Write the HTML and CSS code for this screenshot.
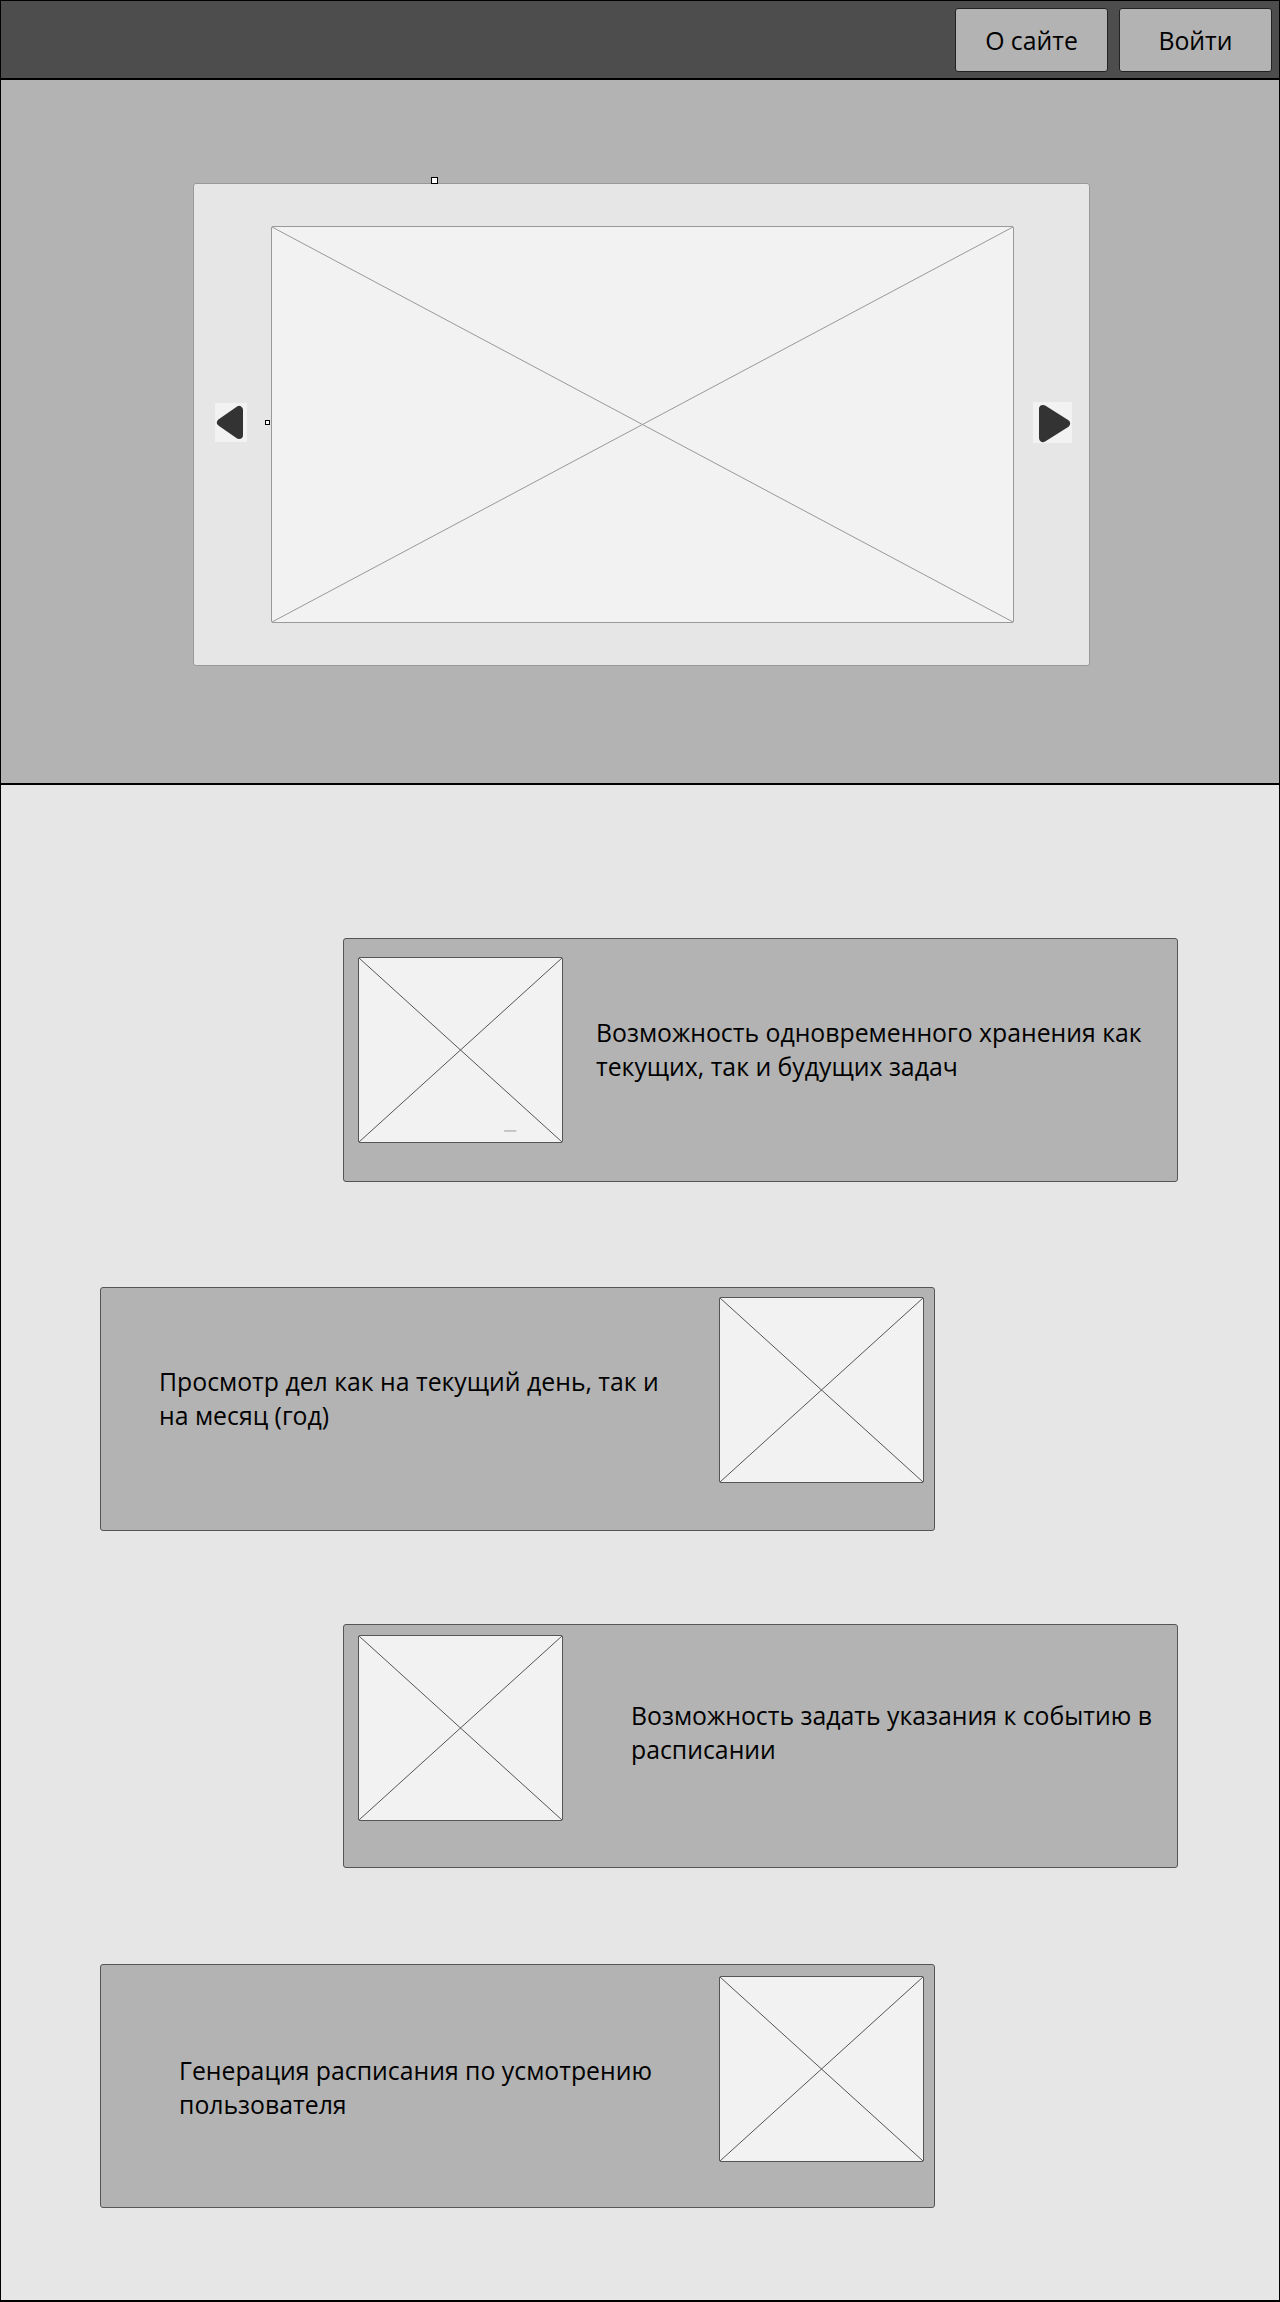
FILE: index.html
```html
<!DOCTYPE html>
<html lang="ru">
<head>
<meta charset="UTF-8" />
<meta name="viewport" content="width=device-width, initial-scale=1.0"/>
<title>Планировщик</title>
<link rel="stylesheet" href="styles.css">
</head>
<body>
<div class="site">

<header class="topbar">
  <button class="top-btn">О сайте</button>
  <button class="top-btn">Войти</button>
</header>

<section class="hero">
  <div class="slider">
    <span class="handle handle-top"></span>
    <span class="handle handle-left"></span>
    <div class="arrow arrow-left">
      <svg width="32" height="39" viewBox="0 0 32 39"><path d="M6 19.5 L24 7 L24 32 Z" fill="#333" stroke="#333" stroke-width="8" stroke-linejoin="round"/></svg>
    </div>
    <div class="placeholder slide">
      <svg viewBox="0 0 100 100" preserveAspectRatio="none"><path d="M0 0 L100 100 M100 0 L0 100" stroke="#999" stroke-width="1" vector-effect="non-scaling-stroke" fill="none"/></svg>
    </div>
    <div class="arrow arrow-right">
      <svg width="39" height="41" viewBox="0 0 39 41"><path d="M10 7 L33 21.5 L10 36 Z" fill="#333" stroke="#333" stroke-width="8" stroke-linejoin="round"/></svg>
    </div>
  </div>
</section>

<section class="features">
  <div class="card card-right card-1">
    <div class="placeholder thumb">
      <svg viewBox="0 0 100 100" preserveAspectRatio="none"><path d="M0 0 L100 100 M100 0 L0 100" stroke="#555" stroke-width="1" vector-effect="non-scaling-stroke" fill="none"/><path d="M71.5 94 L77.5 94" stroke="#999" stroke-width="1" vector-effect="non-scaling-stroke"/></svg>
    </div>
    <p class="card-text">Возможность одновременного хранения как<br>текущих, так и будущих задач</p>
  </div>

  <div class="card card-left card-2">
    <p class="card-text">Просмотр дел как на текущий день, так и<br>на месяц (год)</p>
    <div class="placeholder thumb">
      <svg viewBox="0 0 100 100" preserveAspectRatio="none"><path d="M0 0 L100 100 M100 0 L0 100" stroke="#555" stroke-width="1" vector-effect="non-scaling-stroke" fill="none"/></svg>
    </div>
  </div>

  <div class="card card-right card-3">
    <div class="placeholder thumb">
      <svg viewBox="0 0 100 100" preserveAspectRatio="none"><path d="M0 0 L100 100 M100 0 L0 100" stroke="#555" stroke-width="1" vector-effect="non-scaling-stroke" fill="none"/></svg>
    </div>
    <p class="card-text">Возможность задать указания к событию в<br>расписании</p>
  </div>

  <div class="card card-left card-4">
    <p class="card-text">Генерация расписания по усмотрению<br>пользователя</p>
    <div class="placeholder thumb">
      <svg viewBox="0 0 100 100" preserveAspectRatio="none"><path d="M0 0 L100 100 M100 0 L0 100" stroke="#555" stroke-width="1" vector-effect="non-scaling-stroke" fill="none"/></svg>
    </div>
  </div>
</section>

</div>
</body>
</html>
```

FILE: styles.css
```css
body {
  margin: 0;
  font-family: 'Open Sans', 'Noto Sans', sans-serif;
  color: #000;
}
.site {
  width: 1280px;
  height: 2302px;
  box-sizing: border-box;
  border: 1px solid #000;
  border-bottom-width: 2px;
  background: #e6e6e6;
}
.topbar {
  height: 77px;
  background: #4d4d4d;
  border-bottom: 2px solid #000;
  display: flex;
  justify-content: flex-end;
  align-items: center;
  gap: 11px;
  padding-right: 7px;
}
.top-btn {
  width: 153px;
  height: 64px;
  background: #b3b3b3;
  border: 1px solid #222;
  border-radius: 3px;
  font-family: 'Open Sans', 'Noto Sans', sans-serif;
  font-size: 24.8px;
  color: #000;
  padding: 0;
}
.hero {
  height: 705px;
  box-sizing: border-box;
  background: #b3b3b3;
  border-bottom: 2px solid #000;
  padding-top: 103px;
}
.slider {
  position: relative;
  width: 897px;
  height: 483px;
  margin-left: 192px;
  box-sizing: border-box;
  background: #e6e6e6;
  border: 1px solid #999;
  border-radius: 3px;
  display: flex;
  align-items: center;
  padding: 0 17px 0 21px;
}
.placeholder {
  background: #f2f2f2;
  border-radius: 2px;
  box-sizing: border-box;
  flex-shrink: 0;
}
.placeholder svg {
  display: block;
  width: 100%;
  height: 100%;
}
.slide {
  width: 743px;
  height: 397px;
  border: 1px solid #999;
  margin: 0 19px 0 24px;
}
.arrow {
  background: #f2f2f2;
  display: flex;
}
.arrow-left {
  width: 32px;
  height: 39px;
  margin-top: -4px;
}
.arrow-right {
  width: 39px;
  height: 41px;
  margin-top: -4px;
}
.handle {
  position: absolute;
  background: #fff;
  border: 1px solid #000;
  box-sizing: border-box;
}
.handle-top {
  left: 237px;
  top: -7px;
  width: 7px;
  height: 7px;
}
.handle-left {
  left: 71px;
  top: 236px;
  width: 5px;
  height: 5px;
}
.features {
  padding-top: 153px;
}
.card {
  width: 835px;
  height: 244px;
  box-sizing: border-box;
  background: #b3b3b3;
  border: 1px solid #555;
  border-radius: 3px;
  display: flex;
  align-items: flex-start;
}
.card-right {
  margin-left: 342px;
  padding-left: 14px;
}
.card-left {
  margin-left: 99px;
  justify-content: space-between;
  padding-right: 10px;
}
.thumb {
  width: 205px;
  height: 186px;
  border: 1px solid #555;
}
.card-text {
  margin: 0;
  font-size: 24.8px;
  line-height: 34px;
}
.card-1 {
  padding-top: 18px;
}
.card-1 .card-text {
  margin: 58px 0 0 33px;
}
.card-2 {
  margin-top: 105px;
  padding-top: 9px;
}
.card-2 .card-text {
  margin: 67px 0 0 58px;
}
.card-3 {
  margin-top: 93px;
  padding-top: 10px;
}
.card-3 .card-text {
  margin: 63px 0 0 68px;
}
.card-4 {
  margin-top: 96px;
  padding-top: 11px;
}
.card-4 .card-text {
  margin: 77px 0 0 78px;
}
```
